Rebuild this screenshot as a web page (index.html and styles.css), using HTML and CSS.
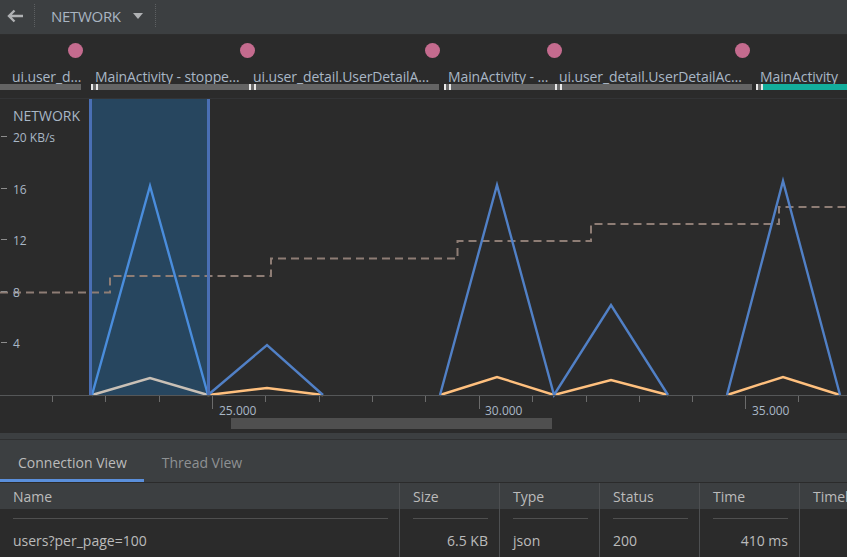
FILE: index.html
```html
<!DOCTYPE html>
<html lang="en">
<head>
<meta charset="utf-8">
<title>Network Profiler</title>
<link rel="stylesheet" href="styles.css">
</head>
<body>
<div class="app">
  <header class="toolbar">
    <span class="back">
      <svg width="18" height="14" viewBox="0 0 18 14"><path d="M17 7H3M8.5 1.5L3 7l5.5 5.5" fill="none" stroke="#afb1b3" stroke-width="2.4"/></svg>
    </span>
    <span class="vsep"></span>
    <span class="title">NETWORK</span>
    <span class="caret"></span>
    <span class="vsep"></span>
  </header>

  <section class="activity">
    <span class="dot" style="left:75px"></span>
    <span class="dot" style="left:247px"></span>
    <span class="dot" style="left:432px"></span>
    <span class="dot" style="left:554px"></span>
    <span class="dot" style="left:742px"></span>
    <div class="lanes">
      <div class="seg first" style="width:81px"><span class="lbl">ui.user_d…</span><div class="bar"><span class="fill"></span></div></div>
      <div class="gap" style="width:10px"></div>
      <div class="seg" style="width:158px"><span class="lbl">MainActivity - stoppe…</span><div class="bar"><span class="mark"></span><span class="fill"></span></div></div>
      <div class="seg" style="width:190px"><span class="lbl">ui.user_detail.UserDetailA…</span><div class="bar"><span class="mark"></span><span class="fill"></span></div></div>
      <div class="gap" style="width:5px"></div>
      <div class="seg" style="width:111px"><span class="lbl">MainActivity - …</span><div class="bar"><span class="mark"></span><span class="fill"></span></div></div>
      <div class="seg" style="width:197px"><span class="lbl">ui.user_detail.UserDetailAc…</span><div class="bar"><span class="mark"></span><span class="fill"></span></div></div>
      <div class="gap" style="width:4px"></div>
      <div class="seg current" style="width:91px"><span class="lbl">MainActivity</span><div class="bar"><span class="mark"></span><span class="fill"></span></div></div>
    </div>
  </section>

  <section class="chart">
    <svg class="plot" width="847" height="334" viewBox="0 99 847 334">
      <rect x="89" y="99" width="121" height="296" fill="#27465f"/>
      <path d="M0 292.5H110V276H271V258.5H457.5V241H591V224H779V207H847" fill="none" stroke="#8e7d75" stroke-width="2" stroke-dasharray="8 5"/>
      <polyline points="92,395 150,378 208,395" fill="none" stroke="#c9c0b6" stroke-width="2.4"/>
      <polyline points="208,395 267,388 323,395" fill="none" stroke="#ffc07e" stroke-width="2.4"/>
      <polyline points="440,395 497,377 554,395 611,380 668,395" fill="none" stroke="#ffc07e" stroke-width="2.4"/>
      <polyline points="727,395 783,377 840,395" fill="none" stroke="#ffc07e" stroke-width="2.4"/>
      <polyline points="92,395 150,186 208,395" fill="none" stroke="#4a8ddc" stroke-width="2.4"/>
      <polyline points="208,395 267,345 323,395" fill="none" stroke="#5180c6" stroke-width="2.4"/>
      <polyline points="440,395 497,185 554,395 611,305 668,395" fill="none" stroke="#5180c6" stroke-width="2.4"/>
      <polyline points="727,395 783,181 840,395" fill="none" stroke="#5180c6" stroke-width="2.4"/>
      <rect x="89" y="99" width="3" height="296" fill="#4a6fb4"/>
      <rect x="207" y="99" width="3" height="296" fill="#4a6fb4"/>
      <g stroke="#8d8d8d" stroke-width="1">
        <path d="M1 136.5H7M1 188.5H7M1 239.5H7M1 291.5H7M1 342.5H7"/>
      </g>
      <path d="M0 395.5H847" stroke="#555758" stroke-width="1"/>
      <g stroke="#6b6b6b" stroke-width="1">
        <path d="M52.5 396V402M105.5 396V402M159.5 396V402M265.5 396V402M319.5 396V402M372.5 396V402M425.5 396V402M532.5 396V402M586.5 396V402M639.5 396V402M692.5 396V402M798.5 396V402"/>
        <path d="M212.5 396V409M479.5 396V409M745.5 396V409"/>
      </g>
      <rect x="231" y="418" width="321" height="11" fill="#4f4f4f"/>
    </svg>
    <div class="chart-title">NETWORK</div>
    <span class="ylbl" style="top:131px">20 KB/s</span>
    <span class="ylbl" style="top:183px">16</span>
    <span class="ylbl" style="top:234px">12</span>
    <span class="ylbl" style="top:286px">8</span>
    <span class="ylbl" style="top:337px">4</span>
    <span class="xlbl" style="left:219px">25.000</span>
    <span class="xlbl" style="left:485px">30.000</span>
    <span class="xlbl" style="left:752px">35.000</span>
  </section>

  <div class="splitter"></div>

  <nav class="tabs">
    <span class="tab active">Connection View</span>
    <span class="tab">Thread View</span>
  </nav>

  <div class="grid">
    <div class="th">Name</div>
    <div class="th">Size</div>
    <div class="th">Type</div>
    <div class="th">Status</div>
    <div class="th">Time</div>
    <div class="th last">Timeline</div>

    <div class="td"><span class="rule"></span><span class="val">users?per_page=100</span></div>
    <div class="td num"><span class="rule"></span><span class="val">6.5 KB</span></div>
    <div class="td"><span class="rule"></span><span class="val">json</span></div>
    <div class="td"><span class="rule"></span><span class="val">200</span></div>
    <div class="td num"><span class="rule"></span><span class="val">410 ms</span></div>
    <div class="td last"></div>
  </div>
</div>
</body>
</html>
```

FILE: styles.css
```css
* { box-sizing: border-box; }
html, body {
  margin: 0;
  padding: 0;
  background: #2b2b2b;
}
body {
  width: 847px;
  height: 557px;
  overflow: hidden;
  font-family: "Open Sans", "Noto Sans", sans-serif;
  font-size: 14px;
  color: #bbbbbb;
}
.app {
  display: flex;
  flex-direction: column;
  width: 847px;
  height: 557px;
  overflow: hidden;
}

/* toolbar */
.toolbar {
  height: 35px;
  flex: none;
  display: flex;
  align-items: center;
  background: #3c3f41;
  border-bottom: 1px solid #2d2d2d;
  padding-left: 6px;
}
.back {
  width: 18px;
  height: 14px;
  display: flex;
  margin-right: 10px;
  margin-top: -3px;
}
.vsep {
  width: 1px;
  height: 23px;
  border-left: 1px dotted #5d6062;
  margin-top: -4px;
}
.title {
  margin-left: 16px;
  margin-top: -3px;
  font-size: 15px;
  color: #a9b5c2;
  letter-spacing: -0.3px;
}
.caret {
  width: 0;
  height: 0;
  border-left: 5.5px solid transparent;
  border-right: 5.5px solid transparent;
  border-top: 6px solid #afb1b3;
  margin-left: 12px;
  margin-right: 12px;
  margin-top: -3px;
}

/* activity lane */
.activity {
  position: relative;
  height: 64px;
  flex: none;
  background: #2b2b2b;
  border-bottom: 1px solid #333436;
  padding-top: 35px;
}
.dot {
  position: absolute;
  top: 8px;
  width: 15px;
  height: 15px;
  margin-left: -7.5px;
  border-radius: 50%;
  background: #c46b8e;
}
.lanes {
  display: flex;
  height: 20px;
}
.seg {
  display: flex;
  flex-direction: column;
  flex: none;
}
.gap { flex: none; }
.lbl {
  height: 14px;
  line-height: 14px;
  padding-left: 4px;
  white-space: nowrap;
  color: #a9b7c6;
  font-size: 14px;
  letter-spacing: -0.1px;
}
.first .lbl { padding-left: 12px; }
.bar {
  display: flex;
  height: 6px;
}
.mark {
  flex: none;
  width: 7px;
  height: 6px;
  background: #6a6a6a;
  border-left: 2px solid #e8e8e8;
  border-right: 2px solid #e8e8e8;
}
.fill {
  flex: 1;
  background: #646464;
}
.current .fill { background: #13ae9c; }

/* chart */
.chart {
  position: relative;
  height: 334px;
  flex: none;
  background: #2b2b2b;
}
.plot { display: block; }
.chart-title {
  position: absolute;
  left: 13px;
  top: 9px;
  font-size: 14px;
  line-height: 16px;
  color: #a9b7c6;
}
.ylbl, .xlbl {
  position: absolute;
  font-size: 12px;
  line-height: 14px;
  color: #a9b7c6;
}
.ylbl { left: 13px; margin-top: -99px; }
.xlbl { top: 305px; }

.splitter {
  height: 7px;
  flex: none;
  background: #3c3f41;
  border-bottom: 1px solid #2f3031;
}

/* tabs */
.tabs {
  height: 43px;
  flex: none;
  display: flex;
  background: #3c3f41;
  border-bottom: 1px solid #2b2b2b;
}
.tab {
  display: flex;
  align-items: center;
  height: 42px;
  padding: 3px 17px 0 18px;
  color: #8e9193;
  font-size: 14px;
}
.tab.active {
  color: #bbbbbb;
  box-shadow: inset 0 -3px 0 #5a8fdb;
}

/* table */
.grid {
  flex: 1;
  display: grid;
  grid-template-columns: 400px 100px 100px 100px 100px 47px;
  grid-template-rows: 26px 1fr;
}
.th {
  background: #3c3f41;
  border-right: 1px solid #4d4f51;
  padding-left: 13px;
  line-height: 27px;
  white-space: nowrap;
  overflow: hidden;
  color: #bbbbbb;
}
.td {
  display: flex;
  flex-direction: column;
  border-right: 1px solid #4d4f51;
  padding: 9px 11px 0 13px;
}
.last { border-right: none; }
.rule {
  height: 1px;
  background: #4f4f4f;
}
.val {
  margin-top: 12px;
  line-height: 19px;
  color: #bbbbbb;
}
.num .val { text-align: right; }
```
